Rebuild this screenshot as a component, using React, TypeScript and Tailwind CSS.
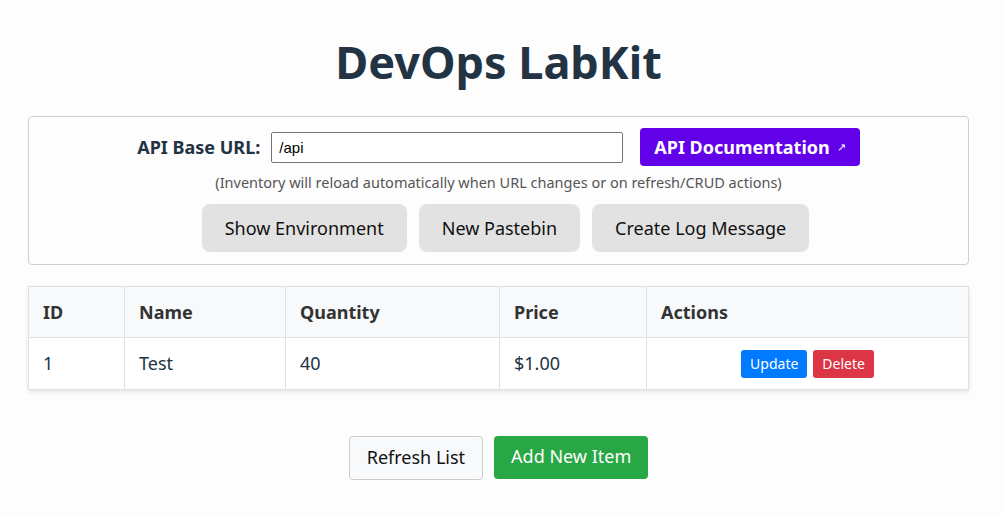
export default function App() {
  const items = [{ id: 1, name: "Test", quantity: 40, price: "$1.00" }];

  return (
    <div className="min-h-[515px] bg-[#fdfdfd] pl-[28px] pt-[28px] font-['Noto_Sans',sans-serif] text-[#333]">
      <div className="w-[941px]">
        <h1 className="text-center text-[45px] font-bold leading-[68px] text-[#223344]">DevOps LabKit</h1>

        {/* Config panel */}
        <div className="mt-[20px] flex flex-col items-center rounded border border-[#cfcfcf] bg-[#fdfdfd] pt-[11px] pb-[12px]">
          <div className="flex items-center">
            <label className="text-[18px] font-bold text-[#223344]">API Base URL:</label>
            <input
              readOnly
              value="/api"
              className="ml-[11px] h-[31px] w-[352px] rounded-[2px] border border-[#767676] bg-white px-[7px] font-['Liberation_Sans',sans-serif] text-[15px] text-black outline-none"
            />
            <button className="ml-[17px] flex h-[38px] items-center rounded-[4px] bg-[#6200ea] px-[14px] text-[18px] font-bold text-white">
              API Documentation
              <span className="ml-[7px] text-[11px] font-normal">↗</span>
            </button>
          </div>
          <p className="mt-[6px] text-[14.5px] leading-[20px] text-[#555]">
            (Inventory will reload automatically when URL changes or on refresh/CRUD actions)
          </p>
          <div className="mt-[12px] ml-[14px] flex gap-[12px]">
            <button className="h-[48px] rounded-[8px] bg-[#e2e2e2] px-[23px] text-[18px] text-[#111]">Show Environment</button>
            <button className="h-[48px] rounded-[8px] bg-[#e2e2e2] px-[23px] text-[18px] text-[#111]">New Pastebin</button>
            <button className="h-[48px] rounded-[8px] bg-[#e2e2e2] px-[23px] text-[18px] text-[#111]">Create Log Message</button>
          </div>
        </div>

        {/* Inventory table */}
        <table className="mt-[21px] w-full border-collapse bg-white shadow-[0_2px_4px_rgba(0,0,0,0.1)]">
          <thead>
            <tr className="bg-[#f8f9fa] text-left text-[18px] font-bold text-[#333]">
              <th className="h-[51px] w-[96px] border border-[#dee2e6] px-[14px]">ID</th>
              <th className="w-[161px] border border-[#dee2e6] px-[14px]">Name</th>
              <th className="w-[214px] border border-[#dee2e6] px-[14px]">Quantity</th>
              <th className="w-[147px] border border-[#dee2e6] px-[14px]">Price</th>
              <th className="border border-[#dee2e6] px-[14px]">Actions</th>
            </tr>
          </thead>
          <tbody>
            {items.map((item) => (
              <tr key={item.id} className="text-[18px] text-[#223344]">
                <td className="h-[52px] border border-[#dee2e6] px-[14px]">{item.id}</td>
                <td className="border border-[#dee2e6] px-[14px]">{item.name}</td>
                <td className="border border-[#dee2e6] px-[14px]">{item.quantity}</td>
                <td className="border border-[#dee2e6] px-[14px]">{item.price}</td>
                <td className="border border-[#dee2e6] px-[14px]">
                  <div className="flex justify-center gap-[6px]">
                    <button className="h-[28px] rounded-[3px] bg-[#007bff] px-[9px] text-[14px] text-white">Update</button>
                    <button className="h-[28px] rounded-[3px] bg-[#dc3545] px-[9px] text-[14px] text-white">Delete</button>
                  </div>
                </td>
              </tr>
            ))}
          </tbody>
        </table>

        {/* Bottom actions */}
        <div className="mt-[46px] flex justify-center gap-[11px]">
          <button className="h-[44px] rounded-[4px] border border-[#cccccc] bg-[#f8f9fa] px-[17px] pb-[2px] text-[18px] text-[#111]">Refresh List</button>
          <button className="h-[43px] rounded-[4px] bg-[#28a745] px-[17px] pb-[2px] text-[18px] text-white">Add New Item</button>
        </div>
      </div>
    </div>
  );
}
